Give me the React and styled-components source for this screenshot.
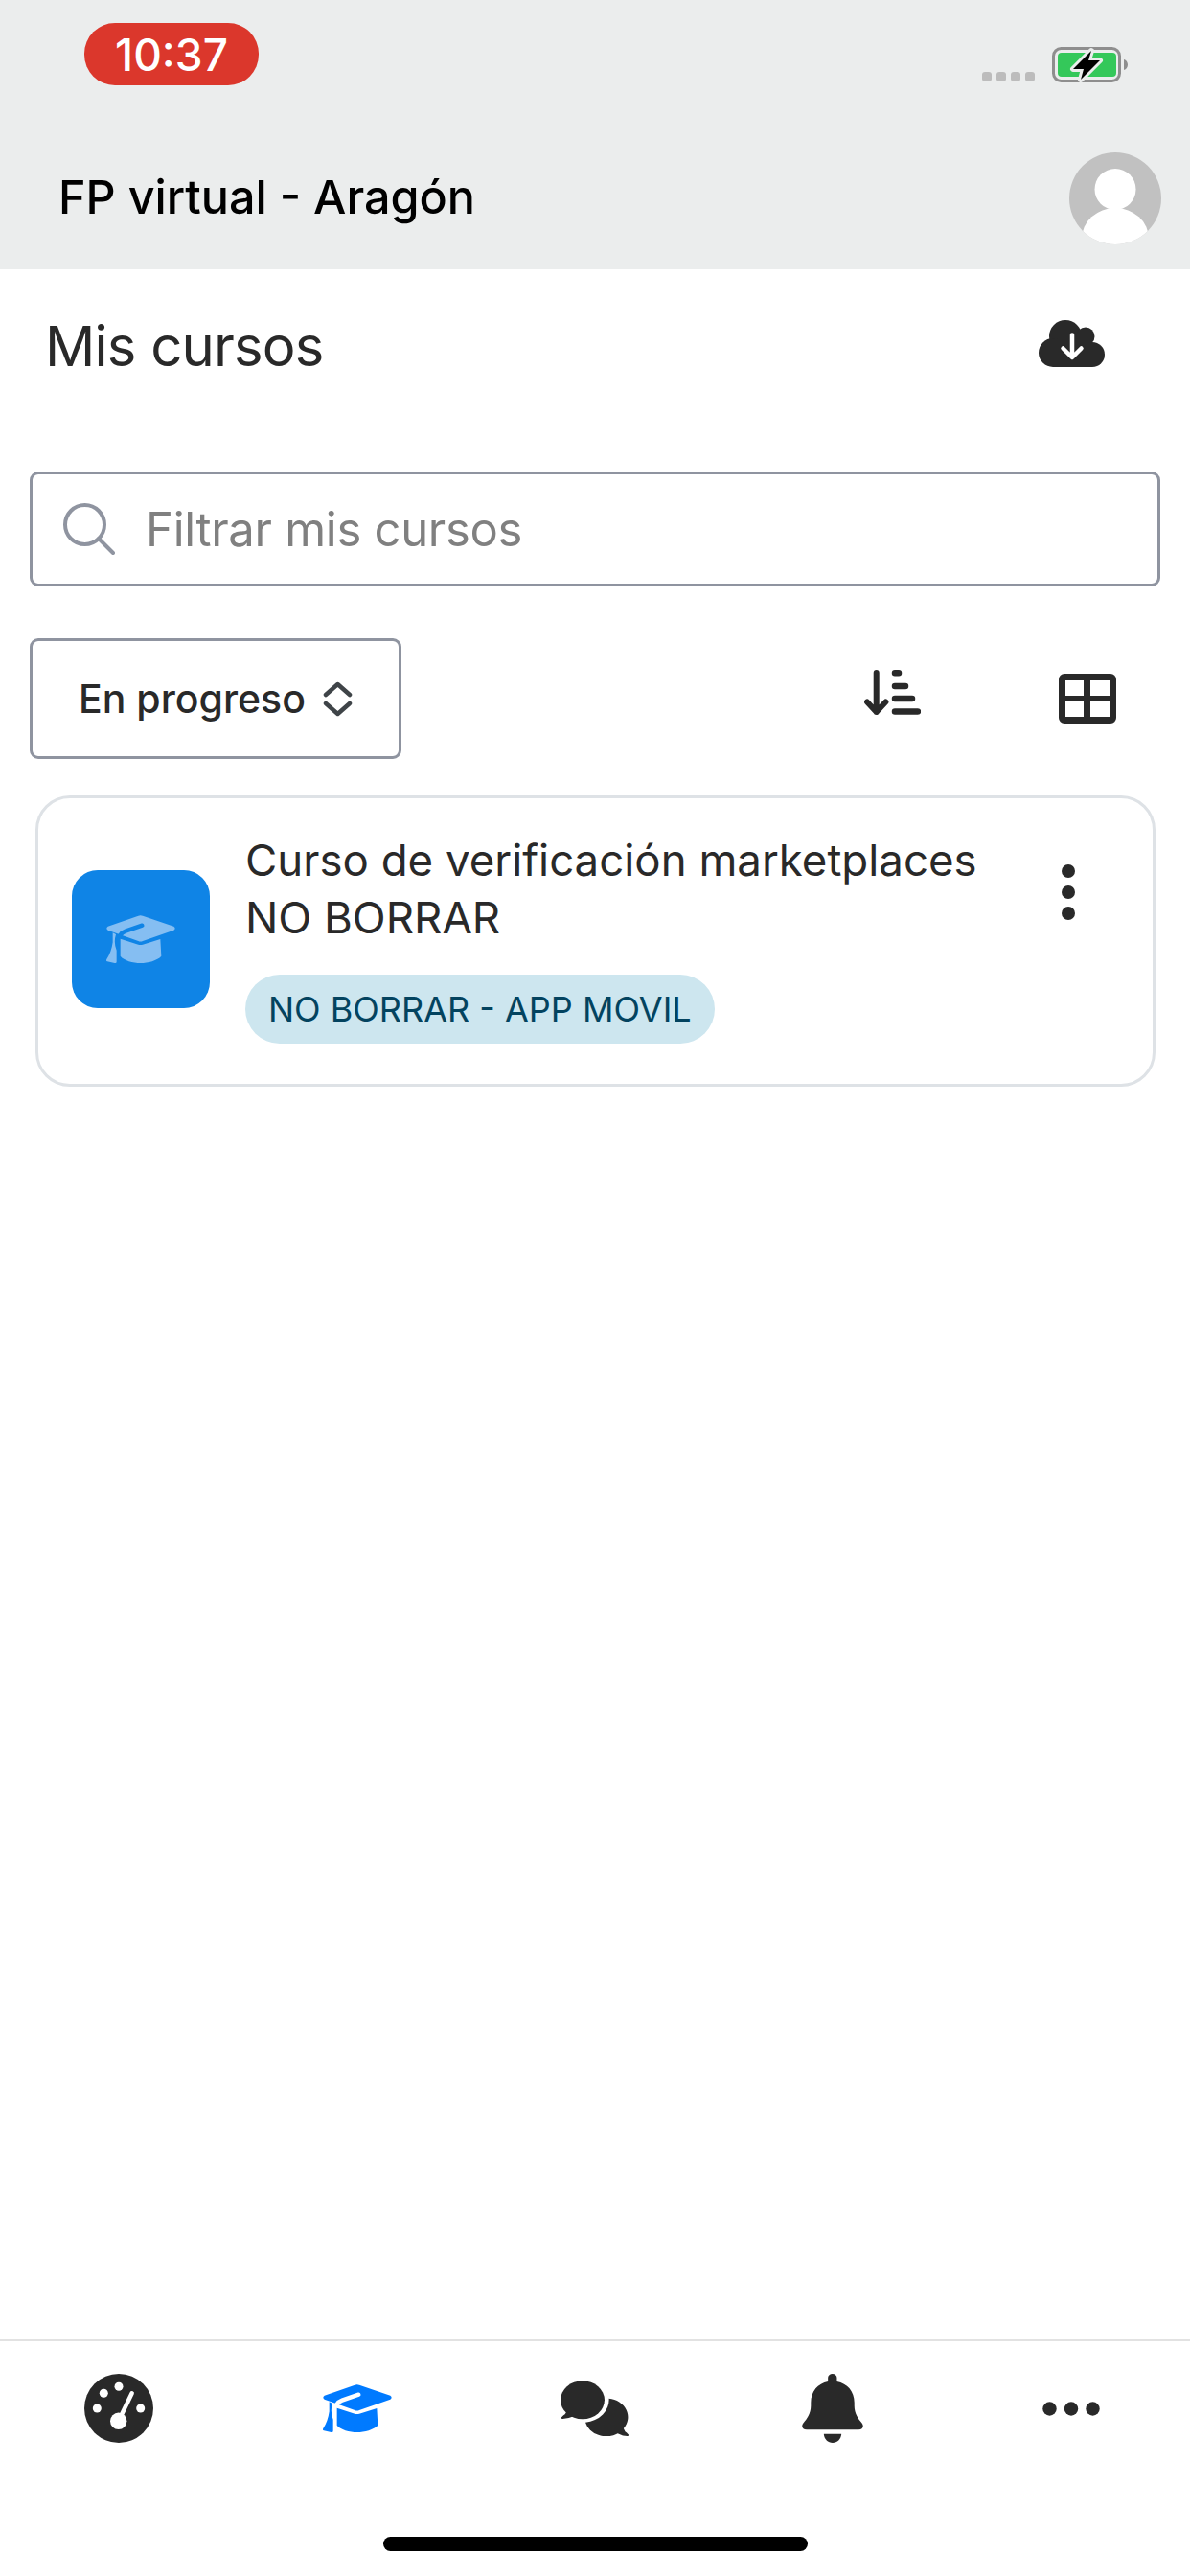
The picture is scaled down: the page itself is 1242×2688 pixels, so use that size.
import React from "react";
import styled, { createGlobalStyle } from "styled-components";

const GlobalStyle = createGlobalStyle`
  html, body {
    margin: 0;
    padding: 0;
    background: #fff;
    font-family: Inter, "Liberation Sans", sans-serif;
  }
  * { box-sizing: border-box; }
`;

const Page = styled.div`
  width: 1242px;
  height: 2688px;
  display: flex;
  flex-direction: column;
  overflow: hidden;
  color: #292929;
`;

const Header = styled.header`
  height: 281px;
  background: #ebeded;
  display: flex;
  flex-direction: column;
`;

const StatusBar = styled.div`
  height: 158px;
  padding: 24px 65px 0 88px;
  display: flex;
  justify-content: space-between;
  align-items: flex-start;
`;

const TimePill = styled.div`
  width: 182px;
  height: 65px;
  border-radius: 32px;
  background: #db372c;
  color: #fff;
  font-size: 46px;
  font-weight: 500;
  display: flex;
  align-items: center;
  justify-content: center;
`;

const StatusIcons = styled.div`
  display: flex;
  align-items: flex-end;
  gap: 18px;
  margin-top: 25px;
`;

const SignalDots = styled.div`
  display: flex;
  gap: 5px;
  margin-bottom: 1px;
`;

const SignalDot = styled.span`
  width: 10px;
  height: 10px;
  border-radius: 3px;
  background: #bcbcbc;
`;

const NavRow = styled.div`
  flex: 1;
  display: flex;
  align-items: flex-start;
  justify-content: space-between;
  padding: 0 30px 0 61px;
`;

const SiteTitle = styled.h1`
  margin: 17px 0 0;
  font-size: 48.5px;
  line-height: 62px;
  font-weight: 500;
  color: #000;
`;

const Avatar = styled.svg`
  width: 96px;
  height: 96px;
  margin-top: 1px;
  display: block;
`;

const Main = styled.main`
  flex: 1;
  display: flex;
  flex-direction: column;
  padding: 0 31px;
`;

const TitleRow = styled.div`
  height: 211px;
  display: flex;
  justify-content: space-between;
  align-items: flex-start;
  padding: 44px 58px 0 16px;
`;

const PageTitle = styled.h2`
  margin: 0;
  font-size: 58px;
  line-height: 72px;
  font-weight: 400;
  letter-spacing: -0.8px;
`;

const CloudIcon = styled.svg`
  width: 69px;
  height: 49px;
  margin-top: 9px;
`;

const SearchBox = styled.div`
  height: 120px;
  border: 3px solid #8f94a0;
  border-radius: 9px;
  display: flex;
  align-items: center;
  gap: 32px;
  padding: 0 0 0 32px;
  font-size: 49px;
  letter-spacing: -0.3px;
  color: #808080;
`;

const SearchIcon = styled.svg`
  width: 54px;
  height: 54px;
  flex: none;
`;

const FilterRow = styled.div`
  margin-top: 54px;
  height: 126px;
  display: flex;
  align-items: center;
  justify-content: space-between;
  padding-right: 46px;
`;

const SelectButton = styled.div`
  width: 388px;
  height: 126px;
  border: 3px solid #8f94a0;
  border-radius: 9px;
  display: flex;
  align-items: center;
  gap: 18px;
  padding-left: 48px;
  font-size: 41px;
  font-weight: 500;
`;

const ViewTools = styled.div`
  display: flex;
  align-items: center;
  gap: 144px;
`;

const SortIcon = styled.svg`
  width: 59px;
  height: 47px;
  margin-bottom: 14px;
`;

const GridIcon = styled.svg`
  width: 60px;
  height: 52px;
`;

const Card = styled.article`
  margin: 38px 5px 0 6px;
  height: 304px;
  border: 3px solid #dee2e6;
  border-radius: 36px;
  display: flex;
  padding: 0 0 0 35px;
`;

const CourseIcon = styled.div`
  width: 144px;
  height: 144px;
  margin-top: 75px;
  flex: none;
  border-radius: 27px;
  background: #0f84e6;
  display: flex;
  align-items: center;
  justify-content: center;
`;

const CardBody = styled.div`
  margin-left: 37px;
  padding-top: 35px;
  flex: 1;
`;

const CourseName = styled.div`
  font-size: 45.6px;
  line-height: 60px;
`;

const Tag = styled.span`
  display: inline-block;
  margin-top: 29px;
  height: 72px;
  line-height: 72px;
  padding: 0 24px;
  border-radius: 36px;
  background: #cde6ef;
  color: #03435f;
  font-size: 36px;
`;

const MoreIcon = styled.svg`
  width: 16px;
  height: 58px;
  margin: 69px 80px 0 0;
  flex: none;
`;

const TabBar = styled.nav`
  height: 247px;
  border-top: 2px solid #e2e2e2;
  display: flex;
  flex-direction: column;
`;

const Tabs = styled.div`
  height: 204px;
  display: grid;
  grid-template-columns: repeat(5, 248.4px);
`;

const Tab = styled.div`
  height: 140px;
  display: flex;
  align-items: center;
  justify-content: center;
  color: ${(p) => (p.$active ? "#007aff" : "#292929")};
`;

const HomeIndicator = styled.div`
  width: 443px;
  height: 15px;
  margin: 0 auto;
  border-radius: 8px;
  background: #000;
`;

function Battery() {
  return (
    <svg width="79" height="37" viewBox="0 0 79 37">
      <rect x="1.500" y="1.500" width="69" height="34" rx="8" fill="none" stroke="#8e8e8e" strokeWidth="3" />
      <rect x="6" y="6" width="61" height="25" rx="4" fill="#34c85a" />
      <path d="M75 13v11c2.500-.8 4-3 4-5.500s-1.500-4.700-4-5.500z" fill="#8e8e8e" />
      <path d="M41 4L22 23h11l-3 11 20-20H38z" fill="#000" stroke="#ebeded" strokeWidth="6" strokeLinejoin="round" />
      <path d="M41 4L22 23h11l-3 11 20-20H38z" fill="#000" />
    </svg>
  );
}

function CapIcon({ cut, fill }) {
  return (
    <svg width="72" height="50" viewBox="0 0 216 150" fill={fill || "currentColor"}>
      <path d="M100 2Q107-1 114 2L211 35Q219 41 211 47L114 81Q107 84 100 81L5 47Q-3 41 5 35Z" />
      <path d="M112 32L60 50Q38 58 36 88" fill="none" stroke={cut} strokeWidth="13" strokeLinecap="round" />
      <path d="M20 55L30 60Q22 85 32 110L32 146Q31 151 26 150L3 145Q-2 143 1 138Q16 115 20 85Z" />
      <path d="M44 74L100 92Q107 94 114 92L169 75L172 128C160 142 130 150 107 150C84 150 54 142 44 128Z" />
    </svg>
  );
}

function GaugeIcon() {
  return (
    <svg width="72" height="72" viewBox="0 0 72 72">
      <circle cx="36" cy="36" r="36" fill="currentColor" />
      <g fill="#fff">
        <circle cx="20.300" cy="20.300" r="4.500" />
        <circle cx="36" cy="13.300" r="4.500" />
        <circle cx="13.300" cy="36" r="4.500" />
        <circle cx="58.700" cy="36" r="4.500" />
        <circle cx="35.700" cy="49.300" r="8.700" />
      </g>
      <path d="M35.700 49.300L49.700 20.300" stroke="#fff" strokeWidth="4.500" strokeLinecap="round" />
    </svg>
  );
}

function ChatIcon() {
  return (
    <svg width="72" height="58" viewBox="0 0 188 174" preserveAspectRatio="none" fill="currentColor">
      <circle cx="60" cy="61" r="60" />
      <path d="M18 95L12 106Q-5 120 6 120Q20 120 36 112Z" />
      <path d="M132 56A59 59 0 0 1 172 150L176 160Q192 174 182 174Q168 174 156 166A59 59 0 0 1 68 131A71 71 0 0 0 132 56Z" />
    </svg>
  );
}

function BellIcon() {
  return (
    <svg width="64" height="72" viewBox="0 0 165 216" preserveAspectRatio="none" fill="currentColor">
      <path d="M70 24V12a12 12 0 0 1 24 0V24C122 30 141 55 141 90V100C141 125 152 142 160 152C168 162 165 175 152 175H13C0 175-3 162 5 152C13 142 24 125 24 100V90C24 55 43 30 70 24Z" />
      <path d="M59 188H106C106 204 95 216 82.500 216C70 216 59 204 59 188Z" />
    </svg>
  );
}

function DotsIcon() {
  return (
    <svg width="60" height="15" viewBox="0 0 60 15" fill="currentColor">
      <circle cx="7.500" cy="7.500" r="7.200" />
      <circle cx="30" cy="7.500" r="7.200" />
      <circle cx="52.500" cy="7.500" r="7.200" />
    </svg>
  );
}

function Chevrons() {
  return (
    <svg width="31" height="37" viewBox="0 0 31 37" fill="none" stroke="#3f4448" strokeWidth="4.500" strokeLinecap="round" strokeLinejoin="round">
      <path d="M3 14L15.500 3 28 14M3 23l12.500 11L28 23" />
    </svg>
  );
}

function App() {
  return (
    <Page>
      <GlobalStyle />
      <Header>
        <StatusBar>
          <TimePill>10:37</TimePill>
          <StatusIcons>
            <SignalDots>
              <SignalDot />
              <SignalDot />
              <SignalDot />
              <SignalDot />
            </SignalDots>
            <Battery />
          </StatusIcons>
        </StatusBar>
        <NavRow>
          <SiteTitle>FP virtual - Aragón</SiteTitle>
          <Avatar viewBox="0 0 96 96">
            <defs>
              <clipPath id="avatarClip">
                <circle cx="48" cy="48" r="48" />
              </clipPath>
            </defs>
            <g clipPath="url(#avatarClip)">
              <rect width="96" height="96" fill="#c1c1c1" />
              <circle cx="48" cy="38.500" r="21.500" fill="#fff" />
              <ellipse cx="48" cy="90" rx="35" ry="32" fill="#fff" />
            </g>
          </Avatar>
        </NavRow>
      </Header>

      <Main>
        <TitleRow>
          <PageTitle>Mis cursos</PageTitle>
          <CloudIcon viewBox="0 0 69 49">
            <g fill="#292929">
              <circle cx="28" cy="17" r="17" />
              <circle cx="49" cy="17" r="9.500" />
              <circle cx="15" cy="34" r="15" />
              <circle cx="56" cy="36" r="13" />
              <rect x="15" y="20" width="41" height="29" />
            </g>
            <path d="M35 15.500V38M25.500 29.500L35 39l9.500-9.500" fill="none" stroke="#fff" strokeWidth="4.500" strokeLinecap="round" strokeLinejoin="round" />
          </CloudIcon>
        </TitleRow>
        <SearchBox>
          <SearchIcon viewBox="0 0 54 54" fill="none" stroke="#8f94a0" strokeWidth="4" strokeLinecap="round">
            <circle cx="22.500" cy="22.500" r="20.500" />
            <path d="M37 37l15 15" />
          </SearchIcon>
          Filtrar mis cursos
        </SearchBox>
        <FilterRow>
          <SelectButton>
            En progreso
            <Chevrons />
          </SelectButton>
          <ViewTools>
            <SortIcon viewBox="0 0 59 47" fill="none" stroke="#292929" strokeLinecap="round" strokeLinejoin="round" strokeWidth="6">
              <path d="M12.700 3v41M3 33.500l9.700 10.500 9.700-10.500" />
              <path d="M32 3.300h4M32 17h11M32 30h18M32 43.500h24" strokeWidth="6.500" />
            </SortIcon>
            <GridIcon viewBox="0 0 60 52">
              <path
                fillRule="evenodd"
                fill="#292929"
                d="M6 0h48a6 6 0 0 1 6 6v40a6 6 0 0 1-6 6H6a6 6 0 0 1-6-6V6a6 6 0 0 1 6-6zM7 7v16h19V7zM33 7v16h20V7zM7 29v16h19V29zM33 29v16h20V29z"
              />
            </GridIcon>
          </ViewTools>
        </FilterRow>
        <Card>
          <CourseIcon>
            <CapIcon fill="#85bef2" cut="#0f84e6" />
          </CourseIcon>
          <CardBody>
            <CourseName>
              Curso de verificación marketplaces
              <br />
              NO BORRAR
            </CourseName>
            <Tag>NO BORRAR - APP MOVIL</Tag>
          </CardBody>
          <MoreIcon viewBox="0 0 16 58" fill="#292929">
            <circle cx="8" cy="7" r="7" />
            <circle cx="8" cy="29" r="7" />
            <circle cx="8" cy="51" r="7" />
          </MoreIcon>
        </Card>
      </Main>

      <TabBar>
        <Tabs>
          <Tab>
            <GaugeIcon />
          </Tab>
          <Tab $active>
            <CapIcon cut="#fff" />
          </Tab>
          <Tab>
            <ChatIcon />
          </Tab>
          <Tab>
            <BellIcon />
          </Tab>
          <Tab>
            <DotsIcon />
          </Tab>
        </Tabs>
        <HomeIndicator />
      </TabBar>
    </Page>
  );
}

export default App;
